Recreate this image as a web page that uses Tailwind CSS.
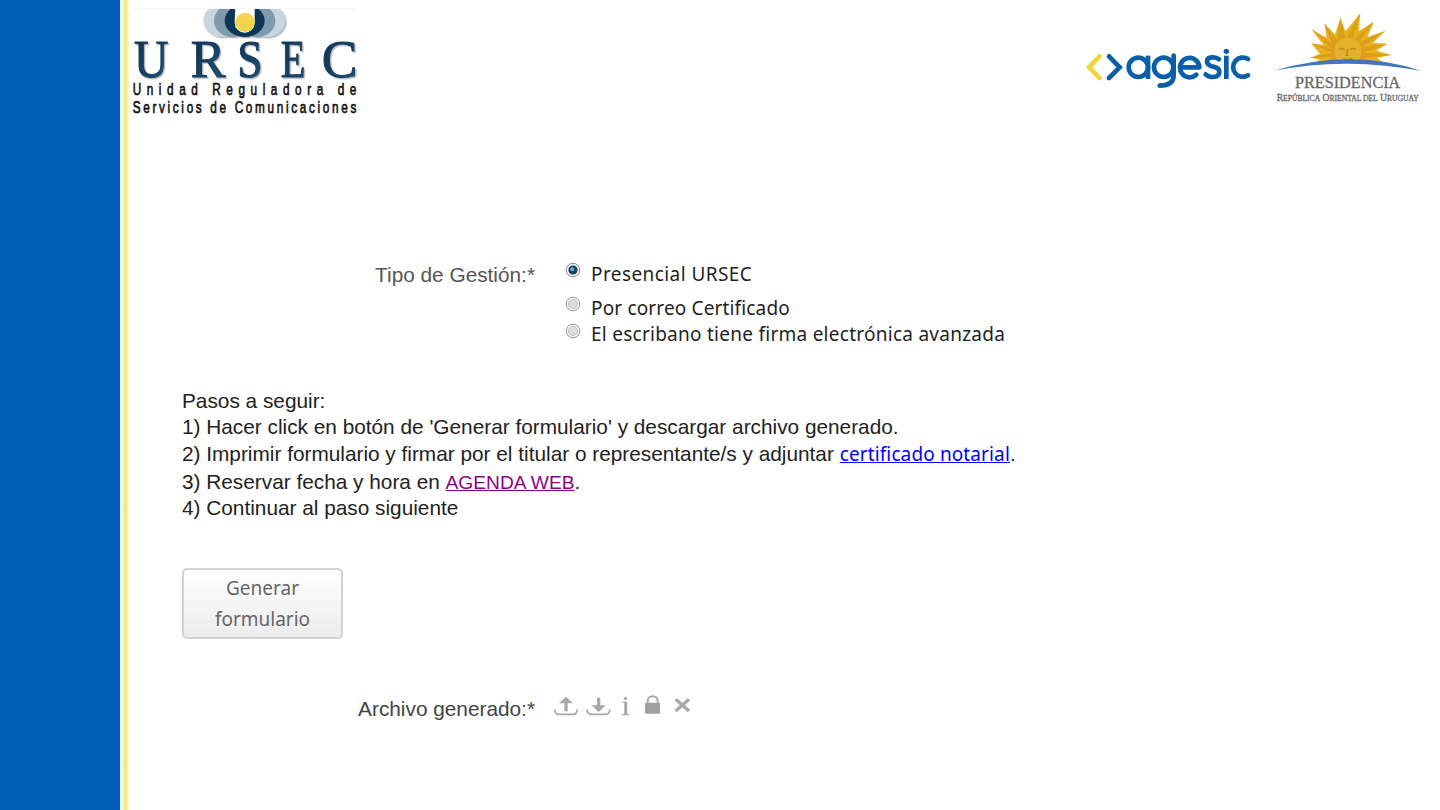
<!DOCTYPE html>
<html lang="es">
<head>
<meta charset="utf-8">
<title>URSEC - Trámite</title>
<script src="https://cdn.jsdelivr.net/npm/@tailwindcss/browser@4"></script>
</head>
<body class="bg-white">
<div class="flex h-[810px] w-[1440px] overflow-hidden bg-white font-['Liberation_Sans',sans-serif] text-[20.8px] text-[#222]">
  <aside class="flex w-[130px] shrink-0">
    <div class="w-[120px] bg-[#025db6]"></div>
    <div class="w-[10px] bg-linear-to-r from-[#eef3f6] from-25% via-[#f8e650] via-55% to-white to-100%"></div>
  </aside>
  <main class="flex w-[1310px] flex-col">
    <header class="flex h-[125px] items-start">
      <svg class="h-[125px] w-[230px]" viewBox="60 0 690 375" role="img" aria-label="URSEC">
        <defs>
          <linearGradient id="navy" x1="0" y1="0" x2="1" y2="1"><stop offset="0" stop-color="#0b2c4a"/><stop offset="1" stop-color="#23587b"/></linearGradient>
          <filter id="shade" x="-5%" y="-10%" width="112%" height="125%"><feDropShadow dx="4" dy="4" stdDeviation="2" flood-color="#667" flood-opacity=".5"/></filter>
          <clipPath id="cut"><rect x="270" y="27" width="270" height="95"/></clipPath>
        </defs>
        <path d="M68 26H740" stroke="#eee" stroke-width="2"/>
        <g clip-path="url(#cut)"><g filter="url(#shade)">
          <ellipse cx="335" cy="62" rx="55" ry="49" fill="#c9d6df"/>
          <ellipse cx="471" cy="62" rx="55" ry="49" fill="#c9d6df"/>
          <ellipse cx="366" cy="62" rx="54" ry="49" fill="#7f99ad"/>
          <ellipse cx="442" cy="62" rx="54" ry="49" fill="#7f99ad"/>
          <ellipse cx="404" cy="62" rx="60" ry="49" fill="#0d3555"/>
          <path d="M376 20H434V68a30 30 0 0 1-60 0z" fill="#fff"/>
          <circle cx="405" cy="67" r="29" fill="#f1d64c"/>
        </g></g>
        <g font-family="Liberation Serif, serif" font-size="156" fill="url(#navy)" stroke="#143d5e" stroke-width="3" filter="url(#shade)">
          <text x="72" y="230" textLength="103" lengthAdjust="spacingAndGlyphs">U</text>
          <text x="242" y="230" textLength="104" lengthAdjust="spacingAndGlyphs">R</text>
          <text x="382" y="230" textLength="76" lengthAdjust="spacingAndGlyphs">S</text>
          <text x="512" y="230" textLength="74" lengthAdjust="spacingAndGlyphs">E</text>
          <text x="635" y="230" textLength="107" lengthAdjust="spacingAndGlyphs">C</text>
        </g>
        <g font-family="Liberation Sans, sans-serif" font-size="49" fill="#111" stroke="#111" stroke-width="2">
          <text transform="translate(68 285) scale(.72 1)" textLength="932">Unidad Reguladora de</text>
          <text transform="translate(68 338) scale(.72 1)" textLength="932">Servicios de Comunicaciones</text>
        </g>
      </svg>
      <svg class="ml-[715px] h-[115px] w-[190px]" viewBox="0 -15 570 345" role="img" aria-label="agesic" fill="none" stroke="#0a5fa8" stroke-width="14" stroke-linecap="round">
        <path d="M74 154L42 187L74 219" stroke="#f0d63f"/>
        <path d="M102 154L134 187L102 219"/>
        <g stroke-linecap="butt">
          <circle cx="190" cy="187" r="29"/><path d="M219 152V222"/>
          <circle cx="266" cy="187" r="29"/><path d="M296 152V211Q296 242 254 242" stroke-linecap="round"/>
          <path d="M315 187H373A29 29 0 1 0 364 209" stroke-linecap="round" stroke-linejoin="round"/>
          <path d="M432 163Q424 156 411 157Q396 158 396 169Q396 181 414 185Q433 188 433 201Q433 215 414 216Q400 216 392 208" stroke-linecap="round"/>
          <path d="M454 152V222"/>
          <path d="M519 162A29 29 0 1 0 519 211" stroke-linecap="round"/>
        </g>
        <circle cx="454" cy="139" r="8" fill="#0a5fa8" stroke="none"/>
      </svg>
      <svg class="h-[110px] w-[170px]" viewBox="0 -15 510 330" role="img" aria-label="Presidencia">
        <path d="M138 180L165 164L136 158L165 146L138 115L175 119L139 73L185 98L178 55L210 89L226 38L241 79L286 25L281 78L327 50L307 96L362 77L324 113L367 116L334 137L381 150L336 158L365 180Q250 160 138 180Z" fill="#e8b21f"/>
        <path d="M139 73L201 116L178 55L216 107L226 38L242 102L286 25L263 106L327 50L281 113L362 77L292 126L367 116L295 143L381 150L298 158L340 176H165L203 157L136 158L200 143L138 115L201 132Z" fill="#d0911a" opacity=".6"/>
        <circle cx="249" cy="139" r="41" fill="#e6b02a"/>
        <path d="M221 134q9-7 18 0M256 134q9-7 18 0M248 132l-4 19h9M235 160q13 7 27 0" fill="none" stroke="#c08a1c" stroke-width="4"/>
        <path d="M138 182Q250 160 368 182V200H138Z" fill="#fff"/>
        <path d="M28 197Q138 164 250 163T470 198Q360 177 250 176T28 197Z" fill="#3f77b9"/>
        <g font-family="Liberation Serif, serif" fill="#666" stroke="#666" stroke-width=".8">
          <text x="90" y="248" font-size="49" textLength="316" lengthAdjust="spacingAndGlyphs">PRESIDENCIA</text>
          <text x="35" y="287" font-size="28" textLength="426" lengthAdjust="spacingAndGlyphs">R<tspan font-size="22">EPÚBLICA</tspan> O<tspan font-size="22">RIENTAL DEL</tspan> U<tspan font-size="22">RUGUAY</tspan></text>
        </g>
      </svg>
    </header>

    <section class="mt-[135px] flex h-[90px] font-['Noto_Sans',sans-serif] text-[19px] text-[#1f1f1f]">
      <div class="w-[405px] pt-[1px] text-right font-['Liberation_Sans',sans-serif] text-[20.8px] leading-[27px] text-[#555]">Tipo de Gestión:*</div>
      <div class="ml-[30px] flex flex-col whitespace-nowrap">
        <label class="flex h-[34px] items-start gap-[10px] leading-[29px]"><svg class="mt-[2px] size-4" viewBox="0 0 16 16"><circle cx="8" cy="8" r="6.8" fill="#eee" stroke="#8b8b8b"/><circle cx="8" cy="8" r="4.6" fill="#12435f"/><circle cx="7.3" cy="7.3" r="2" fill="#57b4dc"/></svg><span class="tracking-[0.42px]">Presencial URSEC</span></label>
        <label class="flex h-[27px] items-start gap-[10px] leading-[29px]"><svg class="mt-[2px] size-4" viewBox="0 0 16 16"><circle cx="8" cy="8" r="6.8" fill="#f4f4f4" stroke="#999"/><circle cx="8" cy="8" r="4.5" fill="#dcdcdc" stroke="#c4c4c4"/></svg><span class="tracking-[0.15px]">Por correo Certificado</span></label>
        <label class="flex h-[27px] items-start gap-[10px] leading-[27px]"><svg class="mt-[2px] size-4" viewBox="0 0 16 16"><circle cx="8" cy="8" r="6.8" fill="#f4f4f4" stroke="#999"/><circle cx="8" cy="8" r="4.5" fill="#dcdcdc" stroke="#c4c4c4"/></svg><span class="tracking-[0.26px]">El escribano tiene firma electrónica avanzada</span></label>
      </div>
    </section>

    <section class="mt-[38px] ml-[52px] whitespace-nowrap">
      <p class="h-[26px] leading-[26px]">Pasos a seguir:</p>
      <p class="h-[27px] leading-[26px]">1) Hacer click en botón de 'Generar formulario' y descargar archivo generado.</p>
      <p class="h-[28px] leading-[26px]">2) Imprimir formulario y firmar por el titular o representante/s y adjuntar <a class="font-['Noto_Sans',sans-serif] text-[19px] tracking-[0.12px] text-[#0000ff] underline">certificado notarial</a>.</p>
      <p class="h-[26px] leading-[26px]">3) Reservar fecha y hora en <a class="text-[19.2px] text-[#8b008b] underline">AGENDA WEB</a>.</p>
      <p class="h-[26px] leading-[26px]">4) Continuar al paso siguiente</p>
    </section>

    <button class="mt-[47px] ml-[52px] h-[71px] w-[161px] rounded-[5px] border-2 border-[#d2d2d2] bg-linear-to-b from-white to-[#ececec] font-['Noto_Sans',sans-serif] text-[19px] leading-[31px] text-[#666]">Generar<br>formulario</button>

    <section class="mt-[54px] flex h-[30px]">
      <div class="w-[405px] text-right leading-[31px] text-[#444]">Archivo generado:*</div>
      <svg class="-mt-[8px] ml-[5px] h-[40px] w-[165px]" viewBox="0 0 495 120" fill="none" stroke="#a8a8a8">
        <path d="M44 73Q45 88 57 88H99Q111 88 112 73M141 73Q142 88 154 88H196Q208 88 210 73" stroke-width="5"/>
        <path d="M78 79V48M176 38V67" stroke-width="10"/>
        <path d="M78 35L99 55H57ZM176 81L155 61H197Z" fill="#a8a8a8" stroke="none"/>
        <text x="245" y="90" font-family="Liberation Serif, serif" font-size="84" fill="#a0a0a0" stroke-width="1">i</text>
        <path d="M323 57V47a15 13 0 0 1 30 0V57" stroke-width="6"/>
        <rect x="315" y="53" width="45" height="33" rx="2" fill="#a0a0a0" stroke="none"/>
        <path d="M407 43L447 78M447 43L407 78" stroke-width="10"/>
      </svg>
    </section>
  </main>
</div>
</body>
</html>
